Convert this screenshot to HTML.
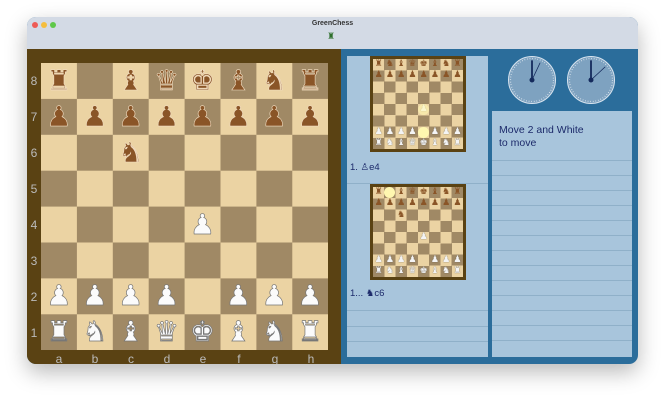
<!DOCTYPE html>
<html><head><meta charset="utf-8"><style>
*{margin:0;padding:0;box-sizing:border-box}
body{width:665px;height:400px;background:#fff;position:relative;overflow:hidden;font-family:"Liberation Sans",sans-serif}
.win{position:absolute;left:27px;top:17px;width:611px;height:347px;border-radius:9px;overflow:hidden;box-shadow:0 8px 22px rgba(0,0,0,.28);background:#2b6d9b}
.title{position:absolute;left:0;top:0;width:611px;height:32px;background:#d3dae5}
.dot{position:absolute;top:5px;width:6px;height:6px;border-radius:50%}
.ttl{position:absolute;top:3px;left:0;width:611px;text-align:center;font-size:7px;font-weight:bold;color:#333}
.frame{position:absolute;left:0;top:32px;width:314px;height:315px;background:#5a4213}
.board{position:absolute;left:14px;top:14px;width:287px;height:287px;background:conic-gradient(#a08965 0 25%,#ebd3a3 0 50%,#a08965 0 75%,#ebd3a3 0);background-size:71.8px 71.8px}
.row{display:flex;height:35.9px}
.row span{width:35.9px;text-align:center;font-family:"DejaVu Sans",sans-serif;font-size:28px;line-height:35.9px}
.b span{color:#8a5527;-webkit-text-stroke:0.6px #f1dcc0}
.w span{color:#fbfbfb;-webkit-text-stroke:0.7px #777}
.rk{position:absolute;left:0;width:14px;text-align:center;color:#bbb;font-size:12px}
.fl{position:absolute;top:303px;width:35.9px;text-align:center;color:#bbb;font-size:12px}
.list{position:absolute;left:320px;top:39px;width:141px;height:301px;background:#a8c5dc}
.info{position:absolute;left:465px;top:94px;width:140px;height:246px;background:#a8c5dc}
.mini{position:absolute;left:23px;width:96px;height:96px;background:#5a4213}
.mb{position:absolute;left:3px;top:3px;width:90px;height:90px;background:conic-gradient(#a08965 0 25%,#ebd3a3 0 50%,#a08965 0 75%,#ebd3a3 0);background-size:22.5px 22.5px}
.mb .row{height:11.25px}
.mb .row span{width:11.25px;font-size:9px;line-height:11.25px;-webkit-text-stroke:0}
.mb .w span{color:#f4f4f4;text-shadow:0 0 1px #555}
.mb .b span{color:#8a5527}
.hl{position:absolute;width:11px;height:11px;border-radius:50%;background:#fff7b0}
.mv{position:absolute;left:3px;font-size:9.5px;color:#1c2a6a}
.hr{position:absolute;left:0;height:1px;background:#8fb0c9}
</style></head><body>
<div class="win">
<div class="title">
<div class="dot" style="left:5px;background:#ee5b55"></div>
<div class="dot" style="left:14px;background:#f5be3e"></div>
<div class="dot" style="left:23px;background:#5fc84a"></div>
<div class="ttl">GreenChess</div>
<div style="position:absolute;left:300px;top:14px;font-size:9px;color:#2c6e2a">♜</div>
</div>
<div class="frame">
<div class="board">
<div class="row b"><span>♜</span><span></span><span>♝</span><span>♛</span><span>♚</span><span>♝</span><span>♞</span><span>♜</span></div>
<div class="row b"><span>♟</span><span>♟</span><span>♟</span><span>♟</span><span>♟</span><span>♟</span><span>♟</span><span>♟</span></div>
<div class="row b"><span></span><span></span><span>♞</span><span></span><span></span><span></span><span></span><span></span></div>
<div class="row"></div>
<div class="row w"><span></span><span></span><span></span><span></span><span>♟</span><span></span><span></span><span></span></div>
<div class="row"></div>
<div class="row w"><span>♟</span><span>♟</span><span>♟</span><span>♟</span><span></span><span>♟</span><span>♟</span><span>♟</span></div>
<div class="row w"><span>♜</span><span>♞</span><span>♝</span><span>♛</span><span>♚</span><span>♝</span><span>♞</span><span>♜</span></div>
</div>
<div class="rk" style="top:25px">8</div><div class="rk" style="top:61px">7</div><div class="rk" style="top:97px">6</div><div class="rk" style="top:133px">5</div><div class="rk" style="top:169px">4</div><div class="rk" style="top:205px">3</div><div class="rk" style="top:241px">2</div><div class="rk" style="top:277px">1</div>
<div class="fl" style="left:14px">a</div><div class="fl" style="left:50px">b</div><div class="fl" style="left:86px">c</div><div class="fl" style="left:122px">d</div><div class="fl" style="left:158px">e</div><div class="fl" style="left:194px">f</div><div class="fl" style="left:230px">g</div><div class="fl" style="left:266px">h</div>
</div>
<div class="list">
<div class="mini" style="top:0">
<div class="mb">
<div class="hl" style="left:45px;top:67.5px"></div>
<div class="hl" style="left:45px;top:45px;opacity:.6"></div>
<div class="row b"><span>♜</span><span>♞</span><span>♝</span><span>♛</span><span>♚</span><span>♝</span><span>♞</span><span>♜</span></div>
<div class="row b"><span>♟</span><span>♟</span><span>♟</span><span>♟</span><span>♟</span><span>♟</span><span>♟</span><span>♟</span></div>
<div class="row"></div><div class="row"></div>
<div class="row w"><span></span><span></span><span></span><span></span><span>♟</span><span></span><span></span><span></span></div>
<div class="row"></div>
<div class="row w"><span>♟</span><span>♟</span><span>♟</span><span>♟</span><span></span><span>♟</span><span>♟</span><span>♟</span></div>
<div class="row w"><span>♜</span><span>♞</span><span>♝</span><span>♛</span><span>♚</span><span>♝</span><span>♞</span><span>♜</span></div>
</div></div>
<div class="mv" style="top:106px">1. ♙e4</div>
<div class="hr" style="top:127px;width:141px"></div>
<div class="mini" style="top:128px">
<div class="mb">
<div class="hl" style="left:11.25px;top:0"></div>
<div class="row b"><span>♜</span><span></span><span>♝</span><span>♛</span><span>♚</span><span>♝</span><span>♞</span><span>♜</span></div>
<div class="row b"><span>♟</span><span>♟</span><span>♟</span><span>♟</span><span>♟</span><span>♟</span><span>♟</span><span>♟</span></div>
<div class="row b"><span></span><span></span><span>♞</span><span></span><span></span><span></span><span></span><span></span></div>
<div class="row"></div>
<div class="row w"><span></span><span></span><span></span><span></span><span>♟</span><span></span><span></span><span></span></div>
<div class="row"></div>
<div class="row w"><span>♟</span><span>♟</span><span>♟</span><span>♟</span><span></span><span>♟</span><span>♟</span><span>♟</span></div>
<div class="row w"><span>♜</span><span>♞</span><span>♝</span><span>♛</span><span>♚</span><span>♝</span><span>♞</span><span>♜</span></div>
</div></div>
<div class="mv" style="top:232px">1... ♞c6</div>
<div class="hr" style="top:254px;width:141px"></div>
<div class="hr" style="top:270px;width:141px"></div>
<div class="hr" style="top:285px;width:141px"></div>
</div>
<svg style="position:absolute;left:480px;top:39px" width="115" height="50">
<g fill="#7ea2c0" stroke="#d8e4ef" stroke-width="1"><circle cx="25" cy="24" r="23.5"/><circle cx="84" cy="24" r="23.5"/></g>
<g fill="none" stroke="#eef3f8" stroke-width="1.2" stroke-dasharray="0.6 2"><circle cx="25" cy="24" r="21.5"/><circle cx="84" cy="24" r="21.5"/></g>
<g stroke="#142a5c" stroke-linecap="round"><line x1="25" y1="24" x2="25" y2="5" stroke-width="1.8"/><line x1="25" y1="24" x2="33" y2="7" stroke-width=".8"/><circle cx="25" cy="24" r="2" fill="#142a5c"/>
<line x1="84" y1="24" x2="84" y2="5" stroke-width="1.8"/><line x1="84" y1="24" x2="98" y2="11" stroke-width=".8"/><circle cx="84" cy="24" r="2" fill="#142a5c"/></g>
</svg>
<div class="info">
<div style="position:absolute;left:7px;top:13px;font-size:10.5px;line-height:12.5px;color:#1c2a6a">Move 2 and White<br>to move</div>
<div class="hr" style="top:49px;width:140px"></div><div class="hr" style="top:64px;width:140px"></div><div class="hr" style="top:79px;width:140px"></div><div class="hr" style="top:94px;width:140px"></div><div class="hr" style="top:109px;width:140px"></div><div class="hr" style="top:124px;width:140px"></div><div class="hr" style="top:139px;width:140px"></div><div class="hr" style="top:154px;width:140px"></div><div class="hr" style="top:169px;width:140px"></div><div class="hr" style="top:184px;width:140px"></div><div class="hr" style="top:199px;width:140px"></div><div class="hr" style="top:214px;width:140px"></div><div class="hr" style="top:229px;width:140px"></div>
</div>
</div>
</body></html>
